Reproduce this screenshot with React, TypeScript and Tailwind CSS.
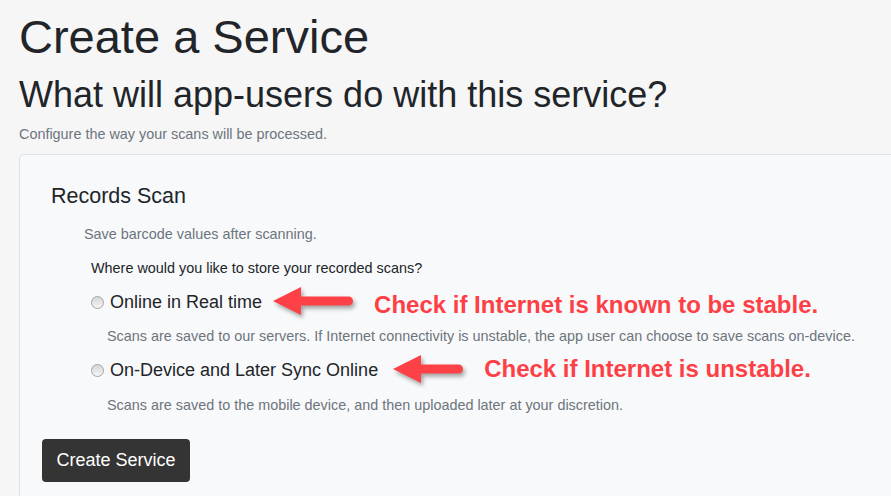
const sans = "font-['Liberation_Sans',Arial,sans-serif]";

function Arrow({ length }: { length: number }) {
  // left-pointing annotation arrow with a rounded tail
  const end = length - 4.5;
  return (
    <svg
      width={length + 5}
      height={32}
      viewBox={`0 0 ${length + 5} 32`}
      className="shrink-0 drop-shadow-[2px_3px_2px_rgba(0,0,0,0.35)]"
      aria-hidden="true"
    >
      <path
        d={`M0 14 L28 0 L28 9.5 L${end} 9.5 A4.5 4.5 0 0 1 ${end} 18.5 L28 18.5 L28 28 Z`}
        fill="#fd4147"
      />
    </svg>
  );
}

function Radio() {
  return (
    <span className="w-[13px] h-[13px] shrink-0 rounded-full border border-[#a3a3a3] bg-gradient-to-b from-[#d6d6d6] to-[#f5f5f5]" />
  );
}

export default function App() {
  return (
    <div className={`w-[891px] h-[496px] overflow-hidden bg-[#f6f6f6] text-[#212529] ${sans}`}>
      <div className="pl-[19px] pt-[8px]">
        <h1 className="text-[47px] leading-[58px]">Create a Service</h1>
        <h2 className="mt-[7px] text-[36px] leading-[43px]">
          What will app-users do with this service?
        </h2>
        <p className="mt-[8px] text-[14.4px] leading-[21px] text-[#6c757d]">
          Configure the way your scans will be processed.
        </p>

        <div className="mt-[9px] w-[920px] h-[400px] rounded-[4px] border border-[#dde2ea] bg-[#f8f9fa] pt-[29px] pl-[22px]">
          <h3 className="pl-[9px] text-[21.5px] leading-[25px]">Records Scan</h3>
          <p className="mt-[15px] pl-[42px] text-[14.4px] leading-[21px] text-[#6c757d]">
            Save barcode values after scanning.
          </p>
          <p className="mt-[13px] pl-[49px] text-[14.4px] leading-[21px]">
            Where would you like to store your recorded scans?
          </p>

          {/* option 1 */}
          <div className="mt-[10px] pl-[49px] h-[27px] flex items-center">
            <Radio />
            <span className="ml-[6px] text-[18px] leading-[27px]">Online in Real time</span>
            <span className="ml-[11px] flex items-center">
              <Arrow length={80} />
            </span>
            <span className="ml-[16px] relative top-[2px] text-[24px] leading-[28px] font-bold text-[#fd3f46] whitespace-nowrap">
              Check if Internet is known to be stable.
            </span>
          </div>
          <p className="mt-[10px] pl-[65px] text-[14.4px] leading-[21px] text-[#6c757d] whitespace-nowrap">
            Scans are saved to our servers. If Internet connectivity is unstable, the app user can choose to save scans on-device.
          </p>

          {/* option 2 */}
          <div className="mt-[10px] pl-[49px] h-[27px] flex items-center">
            <Radio />
            <span className="ml-[6px] text-[18px] leading-[27px]">On-Device and Later Sync Online</span>
            <span className="ml-[15px] flex items-center">
              <Arrow length={70} />
            </span>
            <span className="ml-[16px] relative -top-[2px] text-[24px] leading-[28px] font-bold text-[#fd3f46] whitespace-nowrap">
              Check if Internet is unstable.
            </span>
          </div>
          <p className="mt-[11px] pl-[65px] text-[14.4px] leading-[21px] text-[#6c757d]">
            Scans are saved to the mobile device, and then uploaded later at your discretion.
          </p>

          <button className="mt-[23px] h-[43px] w-[148px] rounded-[4px] bg-[#343434] text-[18px] text-white">
            Create Service
          </button>
        </div>
      </div>
    </div>
  );
}
